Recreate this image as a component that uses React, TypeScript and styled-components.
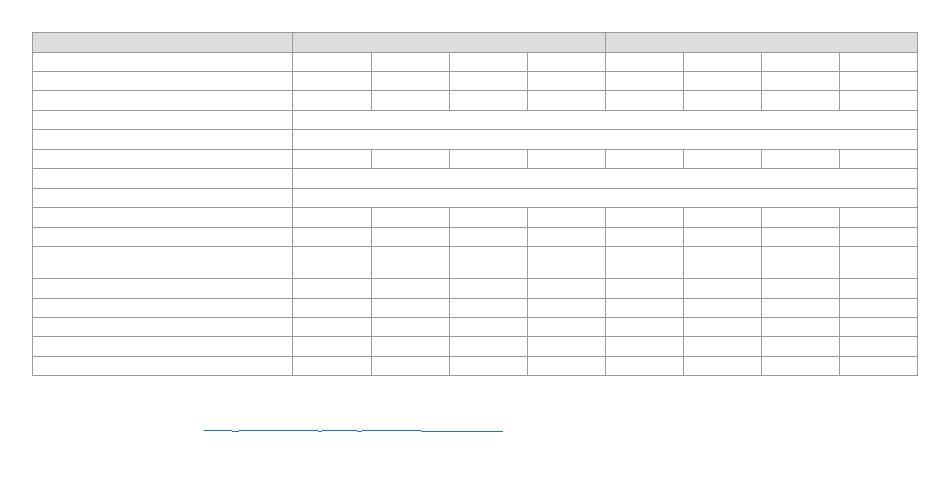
import React from "react";
import styled, { createGlobalStyle } from "styled-components";

const Global = createGlobalStyle`
  html, body { margin: 0; padding: 0; background: #ffffff; }
  body { font-family: "Liberation Sans", Arial, sans-serif; font-size: 13px; }
`;

const Page = styled.div`
  width: 950px;
  height: 481px;
  box-sizing: border-box;
  padding: 32px 0 0 32px;
  display: flex;
  flex-direction: column;
`;

const Table = styled.table`
  border-collapse: collapse;
  table-layout: fixed;
  width: 886px;
  margin-left: -0.5px;
  margin-top: -0.5px;
`;

const Row = styled.tr<{ $h: number }>`
  height: ${(p) => p.$h}px;
`;

const HeadCell = styled.th`
  border: 1px solid #999a9b;
  background: #dcdddf;
  padding: 0;
`;

const Cell = styled.td`
  border: 1px solid #999a9b;
  background: #ffffff;
  padding: 0;
`;

const LinkLine = styled.a`
  display: flex;
  align-items: flex-start;
  margin: 54px 0 0 172px;
  height: 3px;
  text-decoration: none;
`;

const Seg = styled.span<{ $w: number; $low?: boolean }>`
  display: block;
  width: ${(p) => p.$w}px;
  height: 1px;
  margin-top: ${(p) => (p.$low ? 1 : 0)}px;
  background: #1b6ec2;
`;

const rowHeights = [19, 19, 20, 19, 20, 19, 20, 19, 20, 19, 32, 20, 19, 19, 20, 19];
const spanRows = new Set([3, 4, 6, 7]);

export default function App() {
  return (
    <>
      <Global />
      <Page>
        <Table>
          <colgroup>
            <col style={{ width: 260 }} />
            <col style={{ width: 79 }} />
            <col style={{ width: 78 }} />
            <col style={{ width: 78 }} />
            <col style={{ width: 78 }} />
            <col style={{ width: 78 }} />
            <col style={{ width: 78 }} />
            <col style={{ width: 78 }} />
            <col style={{ width: 78 }} />
          </colgroup>
          <thead>
            <Row $h={20}>
              <HeadCell />
              <HeadCell colSpan={4} />
              <HeadCell colSpan={4} />
            </Row>
          </thead>
          <tbody>
            {rowHeights.map((h, i) => (
              <Row key={i} $h={h}>
                <Cell />
                {spanRows.has(i) ? (
                  <Cell colSpan={8} />
                ) : (
                  Array.from({ length: 8 }).map((_, j) => <Cell key={j} />)
                )}
              </Row>
            ))}
          </tbody>
        </Table>
        <LinkLine href="#">
          <Seg $w={28} />
          <Seg $w={7} $low />
          <Seg $w={79} />
          <Seg $w={4} $low />
          <Seg $w={35} />
          <Seg $w={5} $low />
          <Seg $w={59} />
          <Seg $w={82} $low />
        </LinkLine>
      </Page>
    </>
  );
}
